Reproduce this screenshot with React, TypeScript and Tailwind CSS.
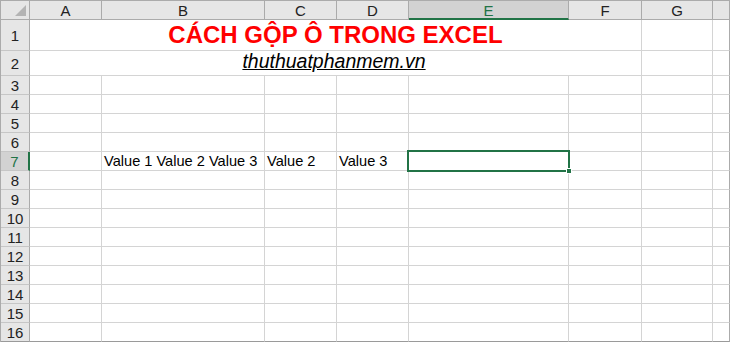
import React from "react";

const COLS = ["A", "B", "C", "D", "E", "F", "G", ""];
const FONT = { fontFamily: '"Liberation Sans", Arial, sans-serif' };

function Corner() {
  return (
    <div className="bg-[#e6e6e6] border-r border-b border-[#ababab] flex items-end justify-end pr-[2px] pb-[2px]">
      <svg width="12" height="12" viewBox="0 0 12 12">
        <polygon points="11,0 11,11 0,11" fill="#b4b4b4" />
      </svg>
    </div>
  );
}

function ColHeader({ label, selected }: { label: string; selected?: boolean }) {
  return selected ? (
    <div className="bg-[#d2d2d2] border-r border-[#ababab] border-b-2 border-b-[#217346] flex items-center justify-center text-[15px] leading-none text-[#217346] pt-[1px]">
      {label}
    </div>
  ) : (
    <div className="bg-[#e6e6e6] border-r border-b border-[#ababab] flex items-center justify-center text-[15px] leading-none text-[#222] pt-[1px]">
      {label}
    </div>
  );
}

function RowHeader({ n, selected, last }: { n: number; selected?: boolean; last?: boolean }) {
  const b = last ? "border-b border-b-[#9a9a9a]" : "border-b border-b-[#c6c6c6]";
  return selected ? (
    <div className={`bg-[#d2d2d2] border-r-2 border-r-[#217346] ${b} flex items-center justify-center text-[15px] leading-none text-[#217346] pt-[1px]`}>
      {n}
    </div>
  ) : (
    <div className={`bg-[#e6e6e6] border-r border-r-[#ababab] ${b} flex items-center justify-center text-[15px] leading-none text-[#222] pt-[1px]`}>
      {n}
    </div>
  );
}

function Cell({ text, last }: { text?: string; last?: boolean }) {
  const b = last ? "border-b-[#9a9a9a]" : "border-b-[#d4d4d4]";
  return (
    <div className={`bg-white border-r border-r-[#d4d4d4] border-b ${b} flex items-end pl-[2px] pb-[1px] overflow-visible whitespace-nowrap text-[14.6px] leading-none text-black`}>
      {text}
    </div>
  );
}

function LastCell({ last }: { last?: boolean }) {
  const b = last ? "border-b-[#9a9a9a]" : "border-b-[#d4d4d4]";
  return <div className={`bg-white border-r border-r-[#ababab] border-b ${b}`} />;
}

export default function App() {
  const rows: React.ReactNode[] = [];

  rows.push(
    <RowHeader key="h1" n={1} />,
    <div
      key="m1"
      className="col-span-6 bg-white border-r border-b border-[#d4d4d4] flex items-end justify-center pb-[3px] text-[24px] leading-none font-bold text-[#ff0000] whitespace-nowrap"
    >
      CÁCH GỘP Ô TRONG EXCEL
    </div>,
    <Cell key="g1" />,
    <LastCell key="x1" />
  );
  rows.push(
    <RowHeader key="h2" n={2} />,
    <div
      key="m2"
      className="col-span-6 bg-white border-r border-b border-[#d4d4d4] flex items-end justify-center pb-[4px] pr-[3px] text-[19.5px] leading-none italic underline text-black whitespace-nowrap"
    >
      thuthuatphanmem.vn
    </div>,
    <Cell key="g2" />,
    <LastCell key="x2" />
  );

  for (let r = 3; r <= 16; r++) {
    const last = r === 16;
    rows.push(<RowHeader key={`h${r}`} n={r} selected={r === 7} last={last} />);
    for (let c = 0; c < 7; c++) {
      let text: string | undefined;
      if (r === 7 && c === 1) text = "Value 1 Value 2 Value 3";
      if (r === 7 && c === 2) text = "Value 2";
      if (r === 7 && c === 3) text = "Value 3";
      rows.push(<Cell key={`c${r}-${c}`} text={text} last={last} />);
    }
    rows.push(<LastCell key={`x${r}`} last={last} />);
  }

  return (
    <div className="w-[730px] h-[342px] bg-white" style={FONT}>
      <div className="relative w-[730px] h-[342px] border-l border-t border-[#ababab] box-border">
        <div className="grid grid-cols-[29px_72px_163px_72px_72px_160px_73px_71px_17px] grid-rows-[19px_31px_25px_repeat(14,19px)]">
          <Corner />
          {COLS.map((c, i) =>
            i === 7 ? (
              <div key="hx" className="bg-[#e6e6e6] border-r border-b border-[#ababab]" />
            ) : (
              <ColHeader key={c} label={c} selected={c === "E"} />
            )
          )}
          {rows}
        </div>
        <div className="absolute left-[406px] top-[149px] w-[163px] h-[22px] border-2 border-[#217346] pointer-events-none" />
        <div className="absolute left-[565px] top-[167px] w-[6px] h-[6px] bg-[#217346] border border-white pointer-events-none" />
      </div>
    </div>
  );
}
